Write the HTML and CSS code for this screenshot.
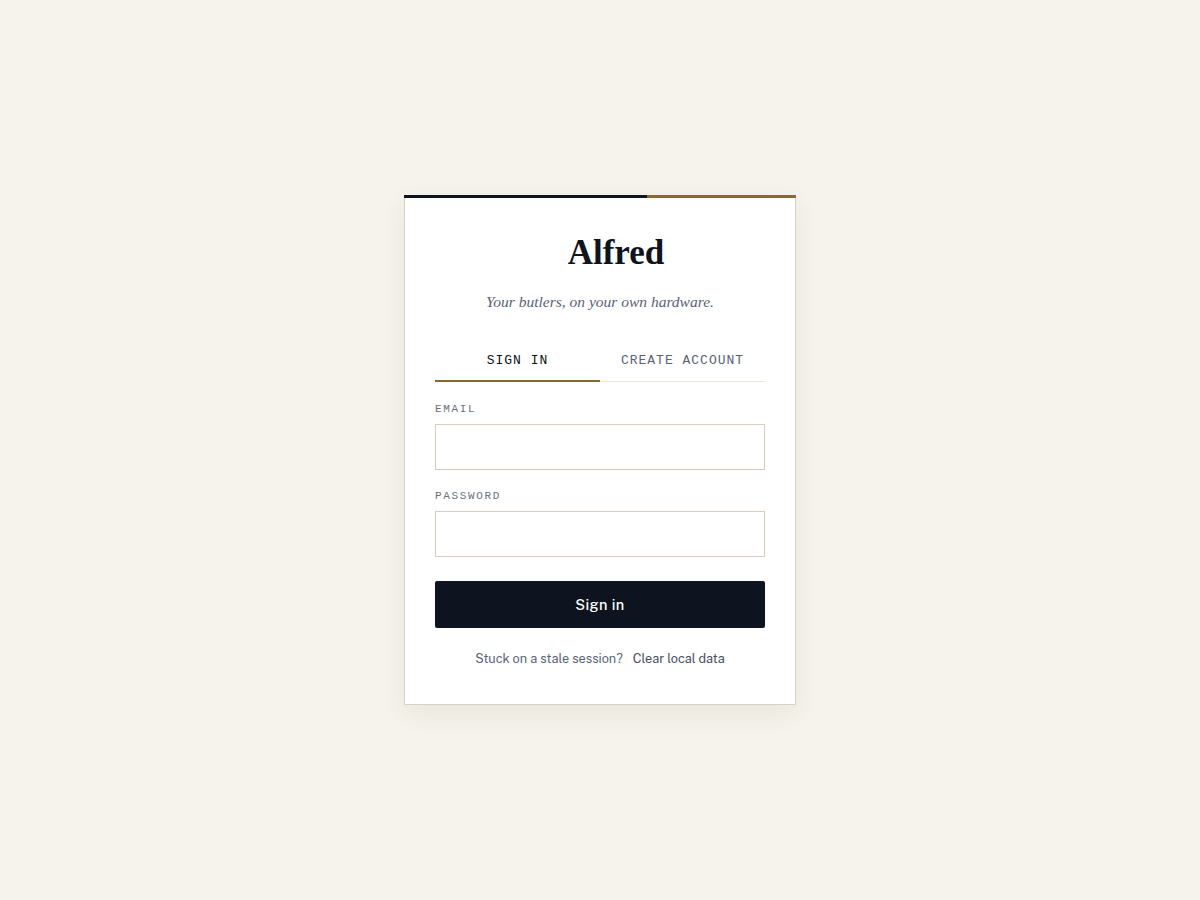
FILE: index.html
```html
<!DOCTYPE html>
<html>
<head>
<meta charset="utf-8">
<link rel="stylesheet" href="styles.css">
</head>
<body>
<div class="page">
  <div class="card">
    <div class="topbar"><div class="bar-dark"></div><div class="bar-gold"></div></div>
    <div class="card-body">
      <h1 class="brand">Alfred</h1>
      <p class="tagline">Your butlers, on your own hardware.</p>
      <div class="tabs">
        <div class="tab active">SIGN IN</div>
        <div class="tab">CREATE ACCOUNT</div>
      </div>
      <form class="form">
        <label class="field">
          <span class="label">EMAIL</span>
          <input class="input" type="email">
        </label>
        <label class="field">
          <span class="label">PASSWORD</span>
          <input class="input" type="password">
        </label>
        <button class="submit" type="button">Sign in</button>
      </form>
      <div class="footer">
        <span>Stuck on a stale session?</span>
        <a class="link">Clear local data</a>
      </div>
    </div>
  </div>
</div>
</body>
</html>
```

FILE: styles.css
```css
* { box-sizing: border-box; }
html, body { margin: 0; padding: 0; }
body {
  background: #f6f3ec;
  font-family: "Public Sans", "Libre Franklin", "Inter", "Liberation Sans", sans-serif;
  color: #0d1420;
}
.page {
  min-height: 900px;
  display: flex;
  justify-content: center;
  padding-top: 195px;
}
.card {
  width: 392px;
  height: 510px;
  background: #ffffff;
  border: 1px solid #d9d3c4;
  border-top: none;
  box-shadow: 0 8px 24px rgba(60, 50, 30, 0.07);
  display: flex;
  flex-direction: column;
}
.topbar {
  display: flex;
  height: 3px;
  margin: 0 -1px;
}
.bar-dark { flex: 0 0 243px; background: #0d1420; }
.bar-gold { flex: 1; background: #8a6a2c; }
.card-body {
  padding: 35px 30px 0;
  display: flex;
  flex-direction: column;
}
.brand {
  margin: 0;
  padding-left: 32px;
  text-align: center;
  font-family: "Liberation Serif", serif;
  font-weight: 700;
  font-size: 35px;
  line-height: 40px;
  color: #0d1420;
}
.tagline {
  margin: 19px 0 0;
  text-align: center;
  font-family: "Liberation Serif", serif;
  font-style: italic;
  font-size: 15.5px;
  line-height: 20px;
  color: #5a6278;
}
.tabs {
  margin-top: 30px;
  display: flex;
  border-bottom: 1px solid #ebe7de;
}
.tab {
  flex: 1;
  text-align: center;
  font-family: "Liberation Mono", monospace;
  font-size: 13px;
  letter-spacing: 1px;
  height: 40px;
  line-height: 37px;
  color: #5a6278;
  border-bottom: 2px solid transparent;
  margin-bottom: -1px;
}
.tab.active {
  color: #0d1420;
  border-bottom-color: #8a6a2c;
}
.form {
  margin-top: 20px;
  display: flex;
  flex-direction: column;
}
.field {
  display: flex;
  flex-direction: column;
  margin-bottom: 19px;
}
.label {
  font-family: "Liberation Mono", monospace;
  font-size: 11px;
  letter-spacing: 1.65px;
  line-height: 14px;
  color: #6b7080;
  margin-bottom: 8px;
}
.input {
  height: 46px;
  border: 1px solid #d6cfbd;
  border-radius: 0;
  background: #fff;
  outline: none;
  font-size: 15px;
  padding: 0 12px;
}
.field + .field { margin-bottom: 24px; }
.submit {
  height: 47px;
  border: none;
  border-radius: 2px;
  background: #0d1420;
  color: #ffffff;
  font-family: "Public Sans", "Libre Franklin", "Inter", "Liberation Sans", sans-serif;
  font-size: 14.5px;
  font-weight: 500;
  letter-spacing: 0.4px;
  cursor: pointer;
}
.footer {
  margin-top: 22px;
  display: flex;
  justify-content: center;
  gap: 10px;
  font-size: 12.7px;
  line-height: 18px;
  color: #5a6278;
}
.link { color: #464e62; cursor: pointer; }
```
